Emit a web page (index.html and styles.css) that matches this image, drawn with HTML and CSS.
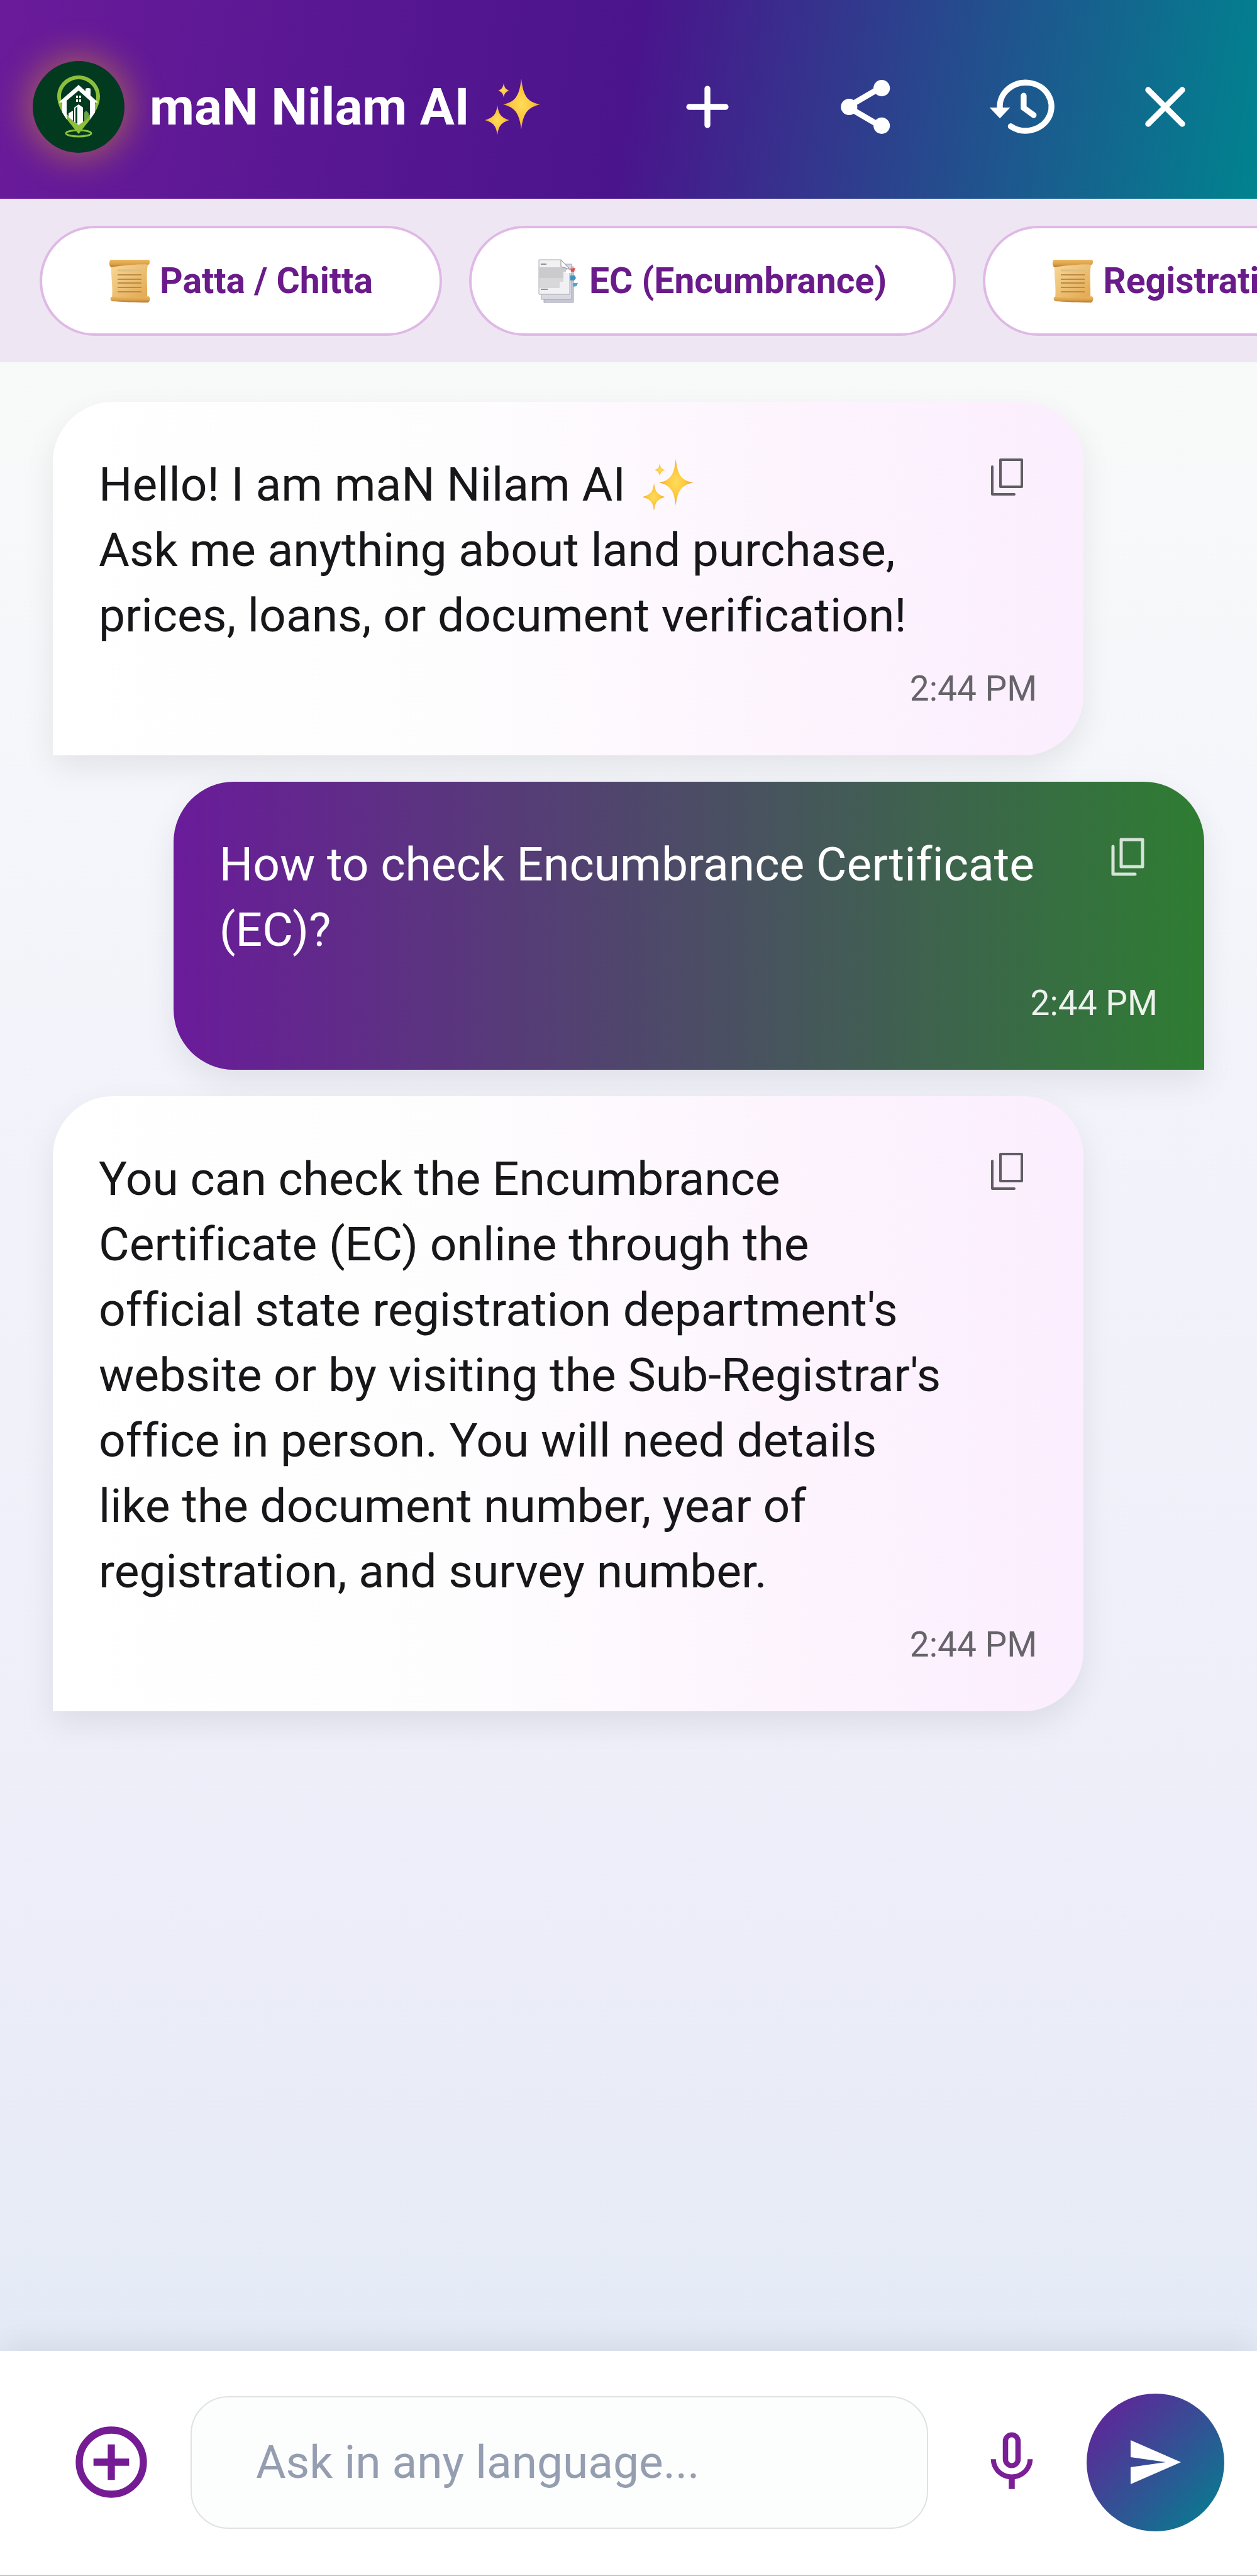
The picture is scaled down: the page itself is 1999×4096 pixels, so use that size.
FILE: index.html
```html
<!DOCTYPE html>
<html lang="en">
<head>
<meta charset="utf-8">
<meta name="viewport" content="width=device-width, initial-scale=1">
<title>maN Nilam AI</title>
<link rel="stylesheet" href="styles.css">
</head>
<body>
<svg class="defs" aria-hidden="true">
  <defs>
    <radialGradient id="gold" cx=".5" cy=".5" r=".5">
      <stop offset="0" stop-color="#ffdc5a"/>
      <stop offset=".6" stop-color="#fcc63c"/>
      <stop offset="1" stop-color="#e9982c"/>
    </radialGradient>
    <linearGradient id="paper" x1="0" y1="0" x2="1" y2="1">
      <stop offset="0" stop-color="#f7d796"/>
      <stop offset="1" stop-color="#e2a850"/>
    </linearGradient>
    <linearGradient id="roll" x1="0" y1="0" x2="0" y2="1">
      <stop offset="0" stop-color="#eeb95e"/>
      <stop offset=".6" stop-color="#dba04a"/>
      <stop offset="1" stop-color="#b4742a"/>
    </linearGradient>
    <symbol id="sparkles" viewBox="0 0 88 90">
      <path fill="url(#gold)" d="M58 0C61 27 67 37 88 41 67 46 61 56 58 81 55 56 49 46 29 41 49 37 55 27 58 0Z"/>
      <path fill="url(#gold)" d="M20 42C22 57 26 62 39 66 26 70 22 75 20 90 18 75 14 70 0 66 14 62 18 57 20 42Z"/>
      <path fill="url(#gold)" d="M30 7C31 14 33 17 39 19 33 21 31 24 30 30 29 24 27 21 21 19 27 17 29 14 30 7Z"/>
    </symbol>
    <symbol id="scroll" viewBox="0 0 66 70">
      <path fill="url(#paper)" d="M4 9H62C59 25 62 45 61 62H5C7 45 3 25 4 9Z"/>
      <path fill="url(#roll)" d="M3 1H64C66 4 65 8 63 9C45 8 20 10 4 13 0 11 0 4 3 1Z"/>
      <path fill="url(#roll)" d="M4 60C25 62 45 62 63 59 67 61 66 68 62 69 42 69 20 68 5 67 2 65 2 62 4 60Z"/>
      <path stroke="#b98a48" stroke-width="2" d="M14 25H52M14 32H52M14 38H52M14 45H52M14 52H52"/>
      <path stroke="#e0bd80" stroke-width="3" d="M14 18H52"/>
    </symbol>
    <symbol id="tabs" viewBox="0 0 66 70">
      <path fill="#c6c6d2" stroke="#a9a9b6" d="M9 12H56V69H9Z"/>
      <path fill="#d9d9e4" d="M5 8H53V64H5Z" stroke="#a5a5b2"/>
      <path fill="#f1f1f4" stroke="#a8a8b0" d="M1 1H36L50 16V56H1Z"/>
      <path fill="#cbcbcd" d="M2 13H46V20H40V30H2Z"/>
      <path fill="#d8d8da" d="M2 30H40V36H34V46H2Z"/>
      <path fill="#fff" stroke="#8c8c94" d="M36 1 50 16 43 14 36 12Z"/>
      <path stroke="#8f8f99" stroke-width="2" d="M4 8H13M4 48H15"/>
      <rect x="44" y="17" width="9" height="5" rx="2" fill="#fff"/>
      <path fill="#e2504f" d="M51 15 59 14 57 20H52Z"/>
      <path fill="#4390bd" d="M51 26H58L60 30 57 34H51Z"/>
      <path fill="#4fa8d6" d="M55 38 63 38 61 43 55 44Z"/>
    </symbol>
    <symbol id="copy" viewBox="0 0 54 62">
      <path fill="none" stroke="currentColor" stroke-linejoin="round" stroke-linecap="round" d="M16 3H50V46H16ZM3 14V58H38"/>
    </symbol>
  </defs>
</svg>

<div class="app">
  <header class="header">
    <svg class="avatar" viewBox="0 0 146 146" role="img" aria-label="maN Nilam logo">
      <circle cx="73" cy="73" r="73" fill="#023a20"/>
      <ellipse cx="73" cy="115" rx="20" ry="5" fill="none" stroke="#8dc03a" stroke-width="3"/>
      <path fill="#8dc03a" fill-rule="evenodd" d="M73 23C54 23 39 38 39 56 39 77 58 97 73 116 88 97 107 77 107 56 107 38 92 23 73 23ZM73 29C88 29 101 42 101 56 101 74 90 91 73 102 56 91 45 74 45 56 45 42 58 29 73 29Z"/>
      <path fill="#fff" d="M73 38 84 48V44Q88 42 92 44V55L104 66H99V82L91 93V63L73 47 54 63V93L47 82V66H41Z"/>
      <path fill="#fff" d="M69 55H72V59H69ZM74 55H77V59H74ZM69 61H72V65H69ZM74 61H77V65H74Z"/>
      <path fill="#fff" d="M73 69 80 74V97L73 102 66 97V74ZM57 83 64 79V95L57 89Z"/>
      <path fill="#6aa545" d="M82 82 85 79 89 83V90L82 96Z"/>
      <path fill="#023a20" d="M68 75 71 72V100L68 98Z"/>
    </svg>
    <h1 class="title">maN Nilam AI <svg class="title-emoji" aria-hidden="true"><use href="#sparkles"/></svg></h1>
    <nav class="actions">
      <button class="action" aria-label="New chat"><svg viewBox="0 0 24 24"><path class="line" d="M12 5.800V18.200M5.800 12H18.200"/></svg></button>
      <button class="action" aria-label="Share"><svg viewBox="0 0 24 24"><path class="line" d="M6 12 18 5M6 12 18 19"/><circle cx="6.500" cy="12" r="2.800"/><circle cx="17.600" cy="5.600" r="2.800"/><circle cx="17.600" cy="18.400" r="2.800"/></svg></button>
      <button class="action" aria-label="History"><svg viewBox="0 0 24 24"><path class="line" d="M4.100 12.500A8.800 8.200 0 1 1 7.800 18.600M12.200 8.200V12.300L15.600 14.800"/><path d="M.6 12.200H7.600L4.100 15.900Z"/></svg></button>
      <button class="action action-close" aria-label="Close"><svg viewBox="0 0 24 24"><path class="line" d="M6.200 6.200 17.800 17.800M17.800 6.200 6.200 17.800"/></svg></button>
    </nav>
  </header>

  <div class="chips">
    <button class="chip"><svg class="chip-emoji" aria-hidden="true"><use href="#scroll"/></svg>Patta / Chitta</button>
    <button class="chip"><svg class="chip-emoji" aria-hidden="true"><use href="#tabs"/></svg>EC (Encumbrance)</button>
    <button class="chip"><svg class="chip-emoji" aria-hidden="true"><use href="#scroll"/></svg>Registration</button>
  </div>

  <main class="chat">
    <article class="bubble bot">
      <div class="row">
        <p class="text">Hello! I am maN Nilam AI <svg class="text-emoji" aria-hidden="true"><use href="#sparkles"/></svg><br>Ask me anything about land purchase, prices, loans, or document verification!</p>
        <button class="copy" aria-label="Copy message"><svg><use href="#copy"/></svg></button>
      </div>
      <time class="time">2:44 PM</time>
    </article>
    <article class="bubble user">
      <div class="row">
        <p class="text">How to check Encumbrance Certificate (EC)?</p>
        <button class="copy" aria-label="Copy message"><svg><use href="#copy"/></svg></button>
      </div>
      <time class="time">2:44 PM</time>
    </article>
    <article class="bubble bot">
      <div class="row">
        <p class="text">You can check the Encumbrance Certificate (EC) online through the official state registration department's website or by visiting the Sub-Registrar's office in person. You will need details like the document number, year of registration, and survey number.</p>
        <button class="copy" aria-label="Copy message"><svg><use href="#copy"/></svg></button>
      </div>
      <time class="time">2:44 PM</time>
    </article>
  </main>

  <form class="composer">
    <button class="attach" type="button" aria-label="Add attachment"><svg viewBox="0 0 24 24"><circle cx="12" cy="12" r="9" /><path d="M12 7V17M7 12H17"/></svg></button>
    <input class="input" type="text" placeholder="Ask in any language..." aria-label="Ask in any language">
    <button class="mic" type="button" aria-label="Voice input"><svg viewBox="0 0 24 24"><path d="M12 14c1.660 0 3-1.340 3-3V5c0-1.660-1.340-3-3-3S9 3.340 9 5v6c0 1.660 1.340 3 3 3zm-1.200-9.100c0-.66.54-1.200 1.200-1.200s1.200.54 1.200 1.200v6.200c0 .66-.53 1.200-1.200 1.200s-1.200-.54-1.200-1.200V4.900zM17.300 11c0 3-2.540 5.100-5.300 5.100S6.700 14 6.700 11H5c0 3.410 2.720 6.230 6 6.720V21h2v-3.280c3.280-.49 6-3.310 6-6.720h-1.700z"/></svg></button>
    <button class="send" type="submit" aria-label="Send"><svg viewBox="0 0 80 70"><path d="M0 0 80 35 0 70V43L56 35 0 27Z"/></svg></button>
  </form>
</div>
</body>
</html>
```
FILE: styles.css
```css
* {
  box-sizing: border-box;
}

body {
  margin: 0;
  font-family: Roboto, "Noto Sans", sans-serif;
  font-variant-ligatures: none;
  color: #17171a;
}

button {
  margin: 0;
  padding: 0;
  border: 0;
  background: none;
  color: inherit;
  font: inherit;
  cursor: pointer;
}

svg {
  display: block;
  fill: currentColor;
}

.defs {
  position: absolute;
  width: 0;
  height: 0;
}

.app {
  display: flex;
  flex-direction: column;
  min-height: 100vh;
  overflow: hidden;
  background: linear-gradient(#f8faf9 14%, #f4f5fb 35%, #ecedf8 76%, #e4ebf6 92%);
}

/* Header */
.header {
  display: flex;
  align-items: center;
  height: 316px;
  padding: 24px 45px 0 52px;
  color: #fff;
  background: linear-gradient(99deg, #6a1b9a, #4a148c 50%, #00838f);
}

.avatar {
  flex: none;
  width: 146px;
  height: 146px;
  border-radius: 50%;
  box-shadow: 0 0 56px 8px rgba(255, 193, 7, 0.4);
}

.title {
  display: flex;
  align-items: center;
  gap: 24px;
  flex: 1;
  margin: 0 0 0 40px;
  font-size: 82px;
  line-height: 100px;
  font-weight: 700;
  white-space: nowrap;
}

.title-emoji {
  width: 88px;
  height: 90px;
}

.actions {
  display: flex;
}

.action {
  display: flex;
  justify-content: center;
  width: 251px;
}

.action-close {
  width: 202px;
}

.action svg {
  width: 112px;
  height: 112px;
}

.line {
  fill: none;
  stroke: currentColor;
  stroke-width: 2;
  stroke-linecap: round;
}

/* Quick topics */
.chips {
  display: flex;
  gap: 43px;
  padding: 43px 0 42px 63px;
  background: #efe6f3;
}

.chip {
  display: flex;
  align-items: center;
  flex: none;
  gap: 15px;
  height: 175px;
  padding: 0 106px;
  border: 4px solid #dfb9e6;
  border-radius: 88px;
  background: #fff;
  color: #6a1b8a;
  font-size: 57px;
  font-weight: 700;
  white-space: nowrap;
}

.chip-emoji {
  width: 66px;
  height: 70px;
}

/* Conversation */
.chat {
  display: flex;
  flex-direction: column;
  flex: 1;
  gap: 42px;
  padding: 63px 84px;
}

.bubble {
  width: 82vw;
  padding: 79px 74px 74px 73px;
  border-radius: 96px;
  box-shadow: 0 20px 50px rgba(0, 0, 0, 0.08);
}

.bot {
  align-self: flex-start;
  border-bottom-left-radius: 0;
  background: linear-gradient(90deg, #fff, #fefdfe 40%, #fdf3fe 75%, #fbeefe);
}

.user {
  align-self: flex-end;
  border-bottom-right-radius: 0;
  color: #fff;
  background: linear-gradient(90deg, #6a1b9a, #2e7d32);
}

.row {
  display: flex;
  align-items: flex-start;
  gap: 52px;
}

.text {
  flex: 1;
  margin: 0;
  font-size: 75px;
  line-height: 104px;
}

.text-emoji {
  display: inline-block;
  width: 82px;
  height: 82px;
  margin-left: 8px;
  vertical-align: -16px;
}

.copy {
  flex: none;
  padding: 10px 20px;
  color: #5f5d63;
}

.copy svg {
  width: 54px;
  height: 62px;
  stroke-width: 4;
}

.user .copy {
  color: rgba(255, 255, 255, 0.8);
}

.user .copy svg {
  stroke-width: 5;
}

.time {
  display: block;
  margin-top: 33px;
  font-size: 55px;
  line-height: 64px;
  text-align: right;
  color: #66646a;
}

.user .time {
  color: rgba(255, 255, 255, 0.9);
}

/* Message entry */
.composer {
  display: flex;
  align-items: center;
  height: 358px;
  padding: 0 52px 2px 109px;
  border-bottom: 2px solid #b9cade;
  background: #fff;
  box-shadow: 0 -10px 50px rgba(0, 0, 0, 0.08);
}

.attach svg {
  width: 136px;
  height: 136px;
  fill: none;
  stroke: #751b93;
  stroke-width: 2;
}

.input {
  flex: 1;
  min-width: 0;
  height: 211px;
  margin-left: 58px;
  padding: 0 102px;
  border: 2px solid #dfe1e3;
  border-radius: 60px;
  background: #fcfdfd;
  color: #17171a;
  font-family: inherit;
  font-size: 73px;
}

.input::placeholder {
  color: #959db0;
  opacity: 1;
}

.mic {
  margin: 0 62px 0 76px;
  color: #7b1f96;
}

.mic svg {
  width: 114px;
  height: 114px;
}

.send {
  display: flex;
  align-items: center;
  justify-content: center;
  width: 219px;
  height: 219px;
  border-radius: 50%;
  color: #fff;
  background: linear-gradient(135deg, #6a1b9a, #00838f);
}

.send svg {
  width: 80px;
  height: 70px;
}
```
